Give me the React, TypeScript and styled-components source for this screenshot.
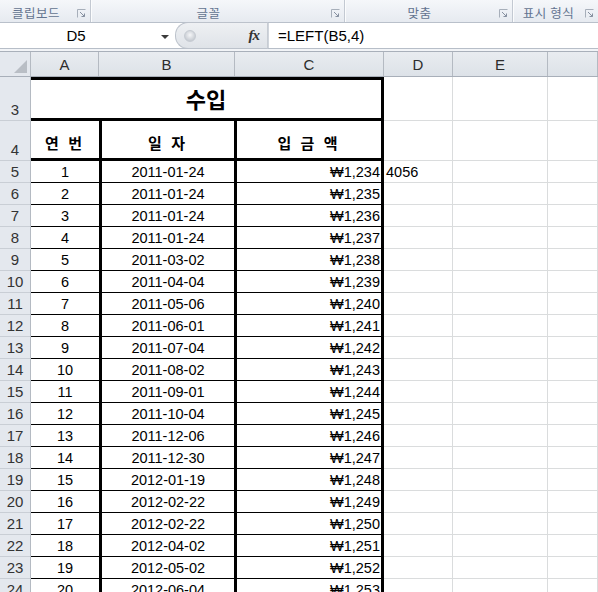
import React from "react";
import styled, { createGlobalStyle } from "styled-components";

const GlobalStyle = createGlobalStyle`
  html, body { margin: 0; padding: 0; background: #ffffff; overflow: hidden; }
  body { font-family: "Liberation Sans", "Noto Sans CJK KR", sans-serif; }
  #root { width: 598px; height: 592px; overflow: hidden; }
`;

const KFONT = `"Liberation Sans", "Noto Sans CJK KR", sans-serif`;
const GRID = "#dadcdd";
const HEAD_BG = "#e4e8ee";
const HEAD_LINE = "#b4bac2";

const Page = styled.div`
  width: 598px;
  height: 592px;
  overflow: hidden;
  display: flex;
  flex-direction: column;
  & > * { flex-shrink: 0; }
`;

const Ribbon = styled.div`
  display: flex;
  height: 22px;
  background: linear-gradient(#f5f7fa, #e6eaf0);
  border-bottom: 1px solid #b9c0ca;
`;

const RibbonGroup = styled.div<{ $w: number; $last?: boolean }>`
  width: ${(p) => p.$w}px;
  flex: ${(p) => (p.$last ? "1" : "none")};
  display: flex;
  align-items: center;
  position: relative;
  border-right: ${(p) => (p.$last ? "none" : "1px solid #c3c9d2")};
  box-shadow: ${(p) => (p.$last ? "none" : "1px 0 0 #fbfcfd")};
`;

const RibbonLabel = styled.span<{ $pad: number }>`
  font-family: "Noto Sans CJK KR", sans-serif;
  font-size: 12.5px;
  line-height: 14px;
  color: #637490;
  flex: 1;
  text-align: center;
  padding-right: ${(p) => p.$pad}px;
  margin-top: 4px;
  letter-spacing: 0.5px;
`;

const Launcher = styled.svg`
  position: absolute;
  right: 4px;
  top: 9px;
`;

const LauncherIcon = () => (
  <Launcher width="9" height="9" viewBox="0 0 9 9">
    <path d="M0.5 8.5V0.5H8.5" fill="none" stroke="#a7afba" strokeWidth="1" />
    <path d="M3 3L7.5 7.5M4.5 7.5H7.5V4.5" fill="none" stroke="#8690a0" strokeWidth="1" />
  </Launcher>
);

const FormulaRow = styled.div`
  display: flex;
  height: 25px;
  background: #ffffff;
  border-bottom: 1px solid #b7bec8;
`;

const NameBox = styled.div`
  width: 175px;
  display: flex;
  align-items: center;
  position: relative;
  background: #ffffff;
`;

const NameText = styled.span`
  font-family: ${KFONT};
  font-size: 15px;
  color: #000;
  width: 152px;
  text-align: center;
`;

const DropArrow = styled.span`
  position: absolute;
  left: 161px;
  top: 12px;
  width: 0;
  height: 0;
  border-left: 4px solid transparent;
  border-right: 4px solid transparent;
  border-top: 4px solid #3b3b3b;
`;

const Splitter = styled.div`
  width: 93px;
  display: flex;
  align-items: center;
  justify-content: space-between;
  background: linear-gradient(#eef0f3, #dfe3e8);
  border: 1px solid #bcc2cb;
  border-right: 1px solid #c7ccd3;
  border-radius: 13px 0 0 13px;
  box-sizing: border-box;
  margin-top: -1px;
  height: 27px;
  padding: 0 8px 0 8px;
`;

const Knob = styled.span`
  width: 10px;
  height: 10px;
  border-radius: 50%;
  background: radial-gradient(circle at 50% 40%, #f5f6f8, #b6bcc4);
  border: 1px solid #c6cbd2;
`;

const Fx = styled.span`
  font-family: "Liberation Serif", serif;
  font-style: italic;
  font-weight: bold;
  font-size: 15px;
  color: #333;
  letter-spacing: -1px;
`;

const FormulaInput = styled.div`
  flex: 1;
  display: flex;
  align-items: center;
  padding-left: 9px;
  font-family: ${KFONT};
  font-size: 15px;
  color: #000;
  border-left: 1px solid #d0d5dc;
`;

const Spacer = styled.div`
  height: 2px;
  background: #f2f4f7;
  border-bottom: 1px solid #a9b0ba;
`;

const ColHeadRow = styled.div`
  display: flex;
  height: 24px;
  background: linear-gradient(#e9ecf0, #dde2e8);
  border-bottom: 1px solid #a8afb9;
`;

const Corner = styled.div`
  width: 30px;
  border-right: 1px solid ${HEAD_LINE};
  position: relative;
  background: ${HEAD_BG};
`;

const CornerTri = styled.span`
  position: absolute;
  right: 3px;
  bottom: 3px;
  width: 0;
  height: 0;
  border-left: 13px solid transparent;
  border-bottom: 13px solid #b9bec5;
`;

const ColHead = styled.div<{ $w?: number }>`
  width: ${(p) => (p.$w ? `${p.$w - 1}px` : "auto")};
  flex: ${(p) => (p.$w ? "none" : "1")};
  border-right: 1px solid ${HEAD_LINE};
  display: flex;
  align-items: center;
  justify-content: center;
  font-family: ${KFONT};
  font-size: 15px;
  color: #2d2d2d;
`;

const Row = styled.div<{ $h: number }>`
  display: flex;
  height: ${(p) => p.$h}px;
  flex: none;
`;

const RowHead = styled.div<{ $bottom?: boolean }>`
  width: 31px;
  flex: none;
  background: ${HEAD_BG};
  border-right: 1px solid ${HEAD_LINE};
  border-bottom: 1px solid #c9ced5;
  box-sizing: border-box;
  display: flex;
  justify-content: center;
  align-items: ${(p) => (p.$bottom ? "flex-end" : "center")};
  padding-bottom: ${(p) => (p.$bottom ? "2px" : "0")};
  font-family: ${KFONT};
  font-size: 15px;
  color: #333;
`;

const Title = styled.div`
  width: 353px;
  flex: none;
  box-sizing: border-box;
  border-top: 3px solid #000;
  border-bottom: 3px solid #000;
  border-right: 3px solid #000;
  display: flex;
  align-items: center;
  justify-content: center;
  font-family: "Noto Sans CJK KR", sans-serif;
  font-weight: bold;
  font-size: 22px;
  color: #000;
  padding-bottom: 2px;
`;

const TCell = styled.div<{
  $w: number;
  $align?: "left" | "center" | "right";
  $thick?: boolean;
  $bold?: boolean;
}>`
  width: ${(p) => p.$w}px;
  flex: none;
  box-sizing: border-box;
  border-right: 3px solid #000;
  border-bottom: ${(p) => (p.$thick ? "3px" : "1px")} solid #000;
  display: flex;
  align-items: center;
  justify-content: ${(p) =>
    p.$align === "right" ? "flex-end" : p.$align === "left" ? "flex-start" : "center"};
  padding-right: ${(p) => (p.$align === "right" ? "1px" : "0")};
  font-family: ${(p) => (p.$bold ? `"Noto Sans CJK KR", sans-serif` : KFONT)};
  font-weight: ${(p) => (p.$bold ? "bold" : "normal")};
  font-size: ${(p) => (p.$bold ? "15px" : "14.5px")};
  letter-spacing: ${(p) => (p.$bold ? "3px" : "0")};
  padding-top: ${(p) => (p.$bold ? "6px" : "0")};
  color: #000;
  white-space: pre;
`;

const GCell = styled.div<{ $w?: number }>`
  width: ${(p) => (p.$w ? `${p.$w}px` : "auto")};
  flex: ${(p) => (p.$w ? "none" : "1")};
  box-sizing: border-box;
  border-right: 1px solid ${GRID};
  border-bottom: 1px solid ${GRID};
  display: flex;
  align-items: center;
  padding-left: 2px;
  font-family: ${KFONT};
  font-size: 14.5px;
  color: #000;
`;

const dates = [
  "2011-01-24",
  "2011-01-24",
  "2011-01-24",
  "2011-01-24",
  "2011-03-02",
  "2011-04-04",
  "2011-05-06",
  "2011-06-01",
  "2011-07-04",
  "2011-08-02",
  "2011-09-01",
  "2011-10-04",
  "2011-12-06",
  "2011-12-30",
  "2012-01-19",
  "2012-02-22",
  "2012-02-22",
  "2012-04-02",
  "2012-05-02",
  "2012-06-04",
];

export default function App() {
  return (
    <Page>
      <GlobalStyle />
      <Ribbon>
        <RibbonGroup $w={90}>
          <RibbonLabel $pad={18}>클립보드</RibbonLabel>
          <LauncherIcon />
        </RibbonGroup>
        <RibbonGroup $w={253}>
          <RibbonLabel $pad={18}>글꼴</RibbonLabel>
          <LauncherIcon />
        </RibbonGroup>
        <RibbonGroup $w={167}>
          <RibbonLabel $pad={18}>맞춤</RibbonLabel>
          <LauncherIcon />
        </RibbonGroup>
        <RibbonGroup $w={88} $last>
          <RibbonLabel $pad={14}>표시 형식</RibbonLabel>
          <LauncherIcon />
        </RibbonGroup>
      </Ribbon>
      <FormulaRow>
        <NameBox>
          <NameText>D5</NameText>
          <DropArrow />
        </NameBox>
        <Splitter>
          <Knob />
          <Fx>fx</Fx>
        </Splitter>
        <FormulaInput>=LEFT(B5,4)</FormulaInput>
      </FormulaRow>
      <Spacer />
      <ColHeadRow>
        <Corner>
          <CornerTri />
        </Corner>
        <ColHead $w={68}>A</ColHead>
        <ColHead $w={136}>B</ColHead>
        <ColHead $w={149}>C</ColHead>
        <ColHead $w={69}>D</ColHead>
        <ColHead $w={95}>E</ColHead>
        <ColHead />
      </ColHeadRow>
      <Row $h={44}>
        <RowHead $bottom>3</RowHead>
        <Title>수입</Title>
        <GCell $w={69} />
        <GCell $w={95} />
        <GCell />
      </Row>
      <Row $h={40}>
        <RowHead $bottom>4</RowHead>
        <TCell $w={71} $thick $bold>
          연 번
        </TCell>
        <TCell $w={135} $thick $bold>
          일 자
        </TCell>
        <TCell $w={147} $thick $bold>
          입 금 액
        </TCell>
        <GCell $w={69} />
        <GCell $w={95} />
        <GCell />
      </Row>
      {dates.map((d, i) => (
        <Row $h={22} key={i}>
          <RowHead>{i + 5}</RowHead>
          <TCell $w={71}>{i + 1}</TCell>
          <TCell $w={135}>{d}</TCell>
          <TCell $w={147} $align="right">
            ₩1,{234 + i}
          </TCell>
          <GCell $w={69}>{i === 0 ? "4056" : ""}</GCell>
          <GCell $w={95} />
          <GCell />
        </Row>
      ))}
    </Page>
  );
}
